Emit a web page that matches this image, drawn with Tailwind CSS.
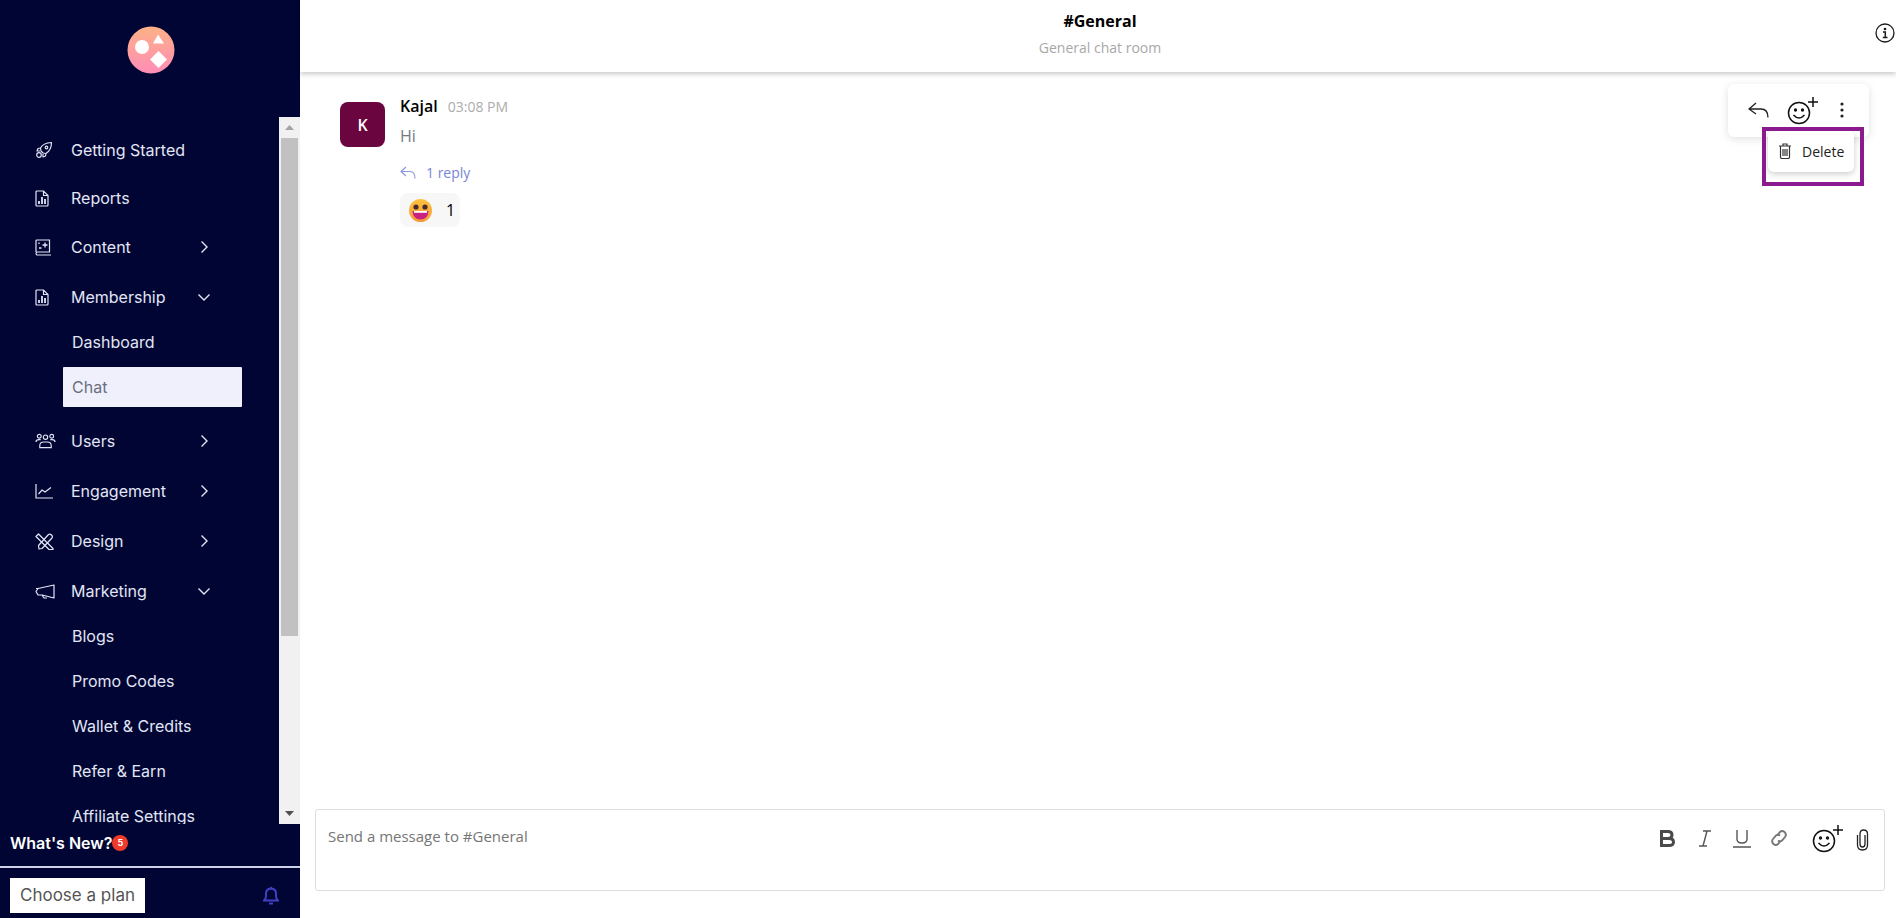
<!DOCTYPE html>
<html lang="en">
<head>
  <meta charset="UTF-8">
  <meta name="viewport" content="width=device-width, initial-scale=1.0">
  <title>Chat</title>
  <script src="https://cdn.jsdelivr.net/npm/@tailwindcss/browser@4"></script>
</head>
<body class="h-screen overflow-hidden bg-white flex font-['Open_Sans',sans-serif]">

  <!-- Sidebar -->
  <aside class="w-[300px] h-[918px] shrink-0 bg-[#000533] flex flex-col font-['Inter',sans-serif] text-[16px] text-[#e3e6f6]">
    <div class="h-[117px] shrink-0 pt-[26px] pl-[1px] flex justify-center">
      <svg width="48" height="48" viewBox="0 0 48 48">
        <defs>
          <linearGradient id="logoGrad" x1="0" y1="0" x2="0" y2="1">
            <stop offset="0" stop-color="#fdb186"/>
            <stop offset="1" stop-color="#ff8db8"/>
          </linearGradient>
        </defs>
        <circle cx="24" cy="24" r="23.500" fill="url(#logoGrad)"/>
        <circle cx="15" cy="21" r="7" fill="#fff"/>
        <path d="M31 8.500 L37 17.500 H26 Z" fill="#fff"/>
        <path d="M31.500 25 L40 33.500 L31.500 42 L23 33.500 Z" fill="#fff"/>
      </svg>
    </div>

    <div class="h-[707px] shrink-0 flex">
      <!-- Menu -->
      <nav class="w-[279px] overflow-hidden pt-[9px]">
        <a class="h-[48px] pl-[35px] flex items-center">
          <span class="w-[36px] shrink-0"><svg width="18" height="18" viewBox="0 0 18 18" fill="none" stroke="#e3e6f6" stroke-width="1.200" stroke-linejoin="round"><path d="M6 10 L5.500 7 Q8 2 16.500 1.500 Q16.500 9 11 12.500 L8 12 Z M5.500 7 L3 7.500 L2 10 L5 10 M11 12.500 L10.500 15 L8 16 L8 13"/><circle cx="11.500" cy="6.500" r="1.300"/><circle cx="4" cy="14" r="2.300"/></svg></span>
          <span>Getting Started</span>
        </a>
        <a class="h-[48px] pl-[35px] flex items-center">
          <span class="w-[36px] shrink-0"><svg width="14" height="17" viewBox="0 0 14 17" fill="none" stroke="#e3e6f6" stroke-width="1.200"><path d="M1 2 Q1 1 2 1 H8.500 L13 5.500 V15 Q13 16 12 16 H2 Q1 16 1 15 Z M8.500 1 V5.500 H13"/><path d="M4 14 V11 M7 14 V7 M10 14 V9" stroke-width="1.800"/></svg></span>
          <span>Reports</span>
        </a>
        <a class="h-[50px] pl-[35px] flex items-center">
          <span class="w-[36px] shrink-0"><svg width="16" height="17" viewBox="0 0 16 17" fill="none" stroke="#e3e6f6" stroke-width="1.200"><path d="M1 13 V2 Q1 1 2 1 H14.500 V13 H2.500 Q1 13 1 14.500 Q1 16 2.500 16 H16"/><path d="M7.500 6 H12.500 M10 3.500 V8.500 M4 3.500 V5 M4 9 H6.500" stroke-width="1.300"/></svg></span>
          <span class="w-[125px]">Content</span>
          <svg width="16" height="16" viewBox="0 0 16 16" fill="none" stroke="#e3e6f6" stroke-width="1.400"><path d="M5.500 2.500 L11 8 L5.500 13.500"/></svg>
        </a>
        <a class="h-[50px] pl-[35px] flex items-center">
          <span class="w-[36px] shrink-0"><svg width="14" height="17" viewBox="0 0 14 17" fill="none" stroke="#e3e6f6" stroke-width="1.200"><path d="M1 2 Q1 1 2 1 H8.500 L13 5.500 V15 Q13 16 12 16 H2 Q1 16 1 15 Z M8.500 1 V5.500 H13"/><path d="M4 14 V11 M7 14 V7 M10 14 V9" stroke-width="1.800"/></svg></span>
          <span class="w-[125px]">Membership</span>
          <svg width="16" height="16" viewBox="0 0 16 16" fill="none" stroke="#e3e6f6" stroke-width="1.400"><path d="M2.500 5.500 L8 11 L13.500 5.500"/></svg>
        </a>
        <a class="h-10 mb-[5px] ml-[63px] w-[179px] pl-[9px] flex items-center">Dashboard</a>
        <a class="h-10 mb-[9px] ml-[63px] w-[179px] pl-[9px] flex items-center bg-[#eff0fb] text-[#6a6e80] rounded-[1px]">Chat</a>
        <a class="h-[50px] pl-[35px] flex items-center">
          <span class="w-[36px] shrink-0"><svg width="21" height="16" viewBox="0 0 22 16" fill="none" stroke="#e3e6f6" stroke-width="1.200"><circle cx="4.500" cy="3" r="2"/><circle cx="11" cy="4" r="2.300"/><circle cx="17.500" cy="3" r="2"/><path d="M1 9 Q1 6.500 4 6.500 H6 M21 9 Q21 6.500 18 6.500 H16 M5 15 V13 Q5 9 9 9 H13 Q17 9 17 13 V15 Z"/></svg></span>
          <span class="w-[125px]">Users</span>
          <svg width="16" height="16" viewBox="0 0 16 16" fill="none" stroke="#e3e6f6" stroke-width="1.400"><path d="M5.500 2.500 L11 8 L5.500 13.500"/></svg>
        </a>
        <a class="h-[50px] pl-[35px] flex items-center">
          <span class="w-[36px] shrink-0"><svg width="18" height="16" viewBox="0 0 18 16" fill="none" stroke="#e3e6f6" stroke-width="1.200"><path d="M1 1 V15 H18"/><path d="M3.500 11 L7 7 L10 9 L16 4.500"/></svg></span>
          <span class="w-[125px]">Engagement</span>
          <svg width="16" height="16" viewBox="0 0 16 16" fill="none" stroke="#e3e6f6" stroke-width="1.400"><path d="M5.500 2.500 L11 8 L5.500 13.500"/></svg>
        </a>
        <a class="h-[50px] pl-[35px] flex items-center">
          <span class="w-[36px] shrink-0"><svg width="19" height="17" viewBox="0 0 19 17" fill="none" stroke="#e3e6f6" stroke-width="1.200" stroke-linejoin="round"><path d="M4 16 L3.500 12.500 L13.500 1.500 Q15 0.500 16.500 2 Q18 3.500 17 5 L7 15.500 Z"/><path d="M1 3.500 L3.500 1 L18 15.500 V16.500 H14 Z"/></svg></span>
          <span class="w-[125px]">Design</span>
          <svg width="16" height="16" viewBox="0 0 16 16" fill="none" stroke="#e3e6f6" stroke-width="1.400"><path d="M5.500 2.500 L11 8 L5.500 13.500"/></svg>
        </a>
        <a class="h-[50px] pl-[35px] flex items-center">
          <span class="w-[36px] shrink-0"><svg width="20" height="15" viewBox="0 0 20 15" fill="none" stroke="#e3e6f6" stroke-width="1.200" stroke-linejoin="round"><path d="M19 1 V14 L7 11 H3 L1 7.500 L3 4.500 Z M3 4.500 H1 M7 11 L9 14 H12"/></svg></span>
          <span class="w-[125px]">Marketing</span>
          <svg width="16" height="16" viewBox="0 0 16 16" fill="none" stroke="#e3e6f6" stroke-width="1.400"><path d="M2.500 5.500 L8 11 L13.500 5.500"/></svg>
        </a>
        <a class="h-10 mb-[5px] ml-[63px] pl-[9px] flex items-center">Blogs</a>
        <a class="h-10 mb-[5px] ml-[63px] pl-[9px] flex items-center">Promo Codes</a>
        <a class="h-10 mb-[5px] ml-[63px] pl-[9px] flex items-center">Wallet &amp; Credits</a>
        <a class="h-10 mb-[5px] ml-[63px] pl-[9px] flex items-center">Refer &amp; Earn</a>
        <a class="h-10 mb-[5px] ml-[63px] pl-[9px] flex items-center">Affiliate Settings</a>
      </nav>

      <!-- Scrollbar -->
      <div class="w-[21px] bg-[#f1f1f1] flex flex-col items-center">
        <div class="h-[21px] flex items-center justify-center">
          <svg width="9" height="5" viewBox="0 0 9 5"><path d="M4.500 0 L9 5 H0 Z" fill="#a3a3a3"/></svg>
        </div>
        <div class="w-[17px] h-[498px] bg-[#c1c1c1]"></div>
        <div class="flex-1 flex items-end justify-center pb-[8px]">
          <svg width="9" height="5" viewBox="0 0 9 5"><path d="M0 0 H9 L4.500 5 Z" fill="#505050"/></svg>
        </div>
      </div>
    </div>

    <div class="h-[42px] shrink-0 pl-[10px] pt-[7px] flex items-start font-semibold text-white">
      <span>What's New?</span>
      <span class="w-4 h-4 mt-[4px] rounded-full bg-[#f03a2b] text-white text-[9px] font-bold flex items-center justify-center">5</span>
    </div>
    <div class="h-[2px] bg-[#cfd2e6] shrink-0"></div>
    <div class="flex-1 pl-[10px] pt-[10px] pr-[21px] flex items-start justify-between">
      <a class="h-[35px] w-[135px] bg-white text-[#555555] text-[17px] flex items-center justify-center">Choose a plan</a>
      <svg class="mt-[8px]" width="16" height="19" viewBox="0 0 16 19" fill="none" stroke="#4040c4" stroke-width="2"><path d="M1 14.500 Q3 13 3 10 V7.500 Q3 3 8 2.500 Q13 3 13 7.500 V10 Q13 13 15 14.500 Z"/><path d="M6 17.500 H10 M8 1 V2.500"/></svg>
    </div>
  </aside>

  <!-- Main -->
  <main class="flex-1 min-w-0 h-[918px] flex flex-col relative">
    <header class="h-[72px] shrink-0 shadow-[0_2px_5px_rgba(0,0,0,0.22)] relative flex flex-col items-center pl-1">
      <h1 class="mt-[9px] text-[16px] leading-6 font-bold text-black">#General</h1>
      <p class="mt-[5px] text-[14px] leading-5 text-[#a8a8a8]">General chat room</p>
      <svg class="absolute right-[1px] top-[23px]" width="20" height="20" viewBox="0 0 20 20" fill="none" stroke="#1a1a1a" stroke-width="1.300"><circle cx="10" cy="10" r="9"/><path d="M8 9 H10.300 V14.500 M7.800 14.500 H12.500" stroke-width="1.500"/><circle cx="10" cy="6" r="0.700" fill="#1a1a1a"/></svg>
    </header>

    <!-- Messages -->
    <section class="flex-1 pl-[40px] pt-[30px] flex gap-[15px] items-start">
      <div class="w-[45px] h-[45px] rounded-lg bg-[#6a0540] text-white text-[16px] font-semibold flex items-center justify-center">K</div>
      <div>
        <div class="flex items-baseline gap-[10px] leading-[24px] -mt-[8px]">
          <span class="text-[16px] font-semibold text-black">Kajal</span>
          <span class="text-[14px] text-[#acacac]">03:08 PM</span>
        </div>
        <p class="mt-[5px] text-[16px] leading-6 text-[#76797f]">Hi</p>
        <div class="mt-[12px] h-6 flex items-center gap-[10px] text-[14px] text-[#7884d6]">
          <svg width="16" height="13" viewBox="0 0 16 13" fill="none" stroke="#8e98de" stroke-width="1.200"><path d="M6 1 L1 5.500 L6 10 M1 5.500 H10 Q15 5.500 15 12.500"/></svg>
          <span>1 reply</span>
        </div>
        <div class="mt-[9px] w-[60px] h-[34px] rounded-lg bg-[#f7f7f7] flex items-center pl-[9px] gap-[14px] text-[16px] text-black">
          <svg width="23" height="23" viewBox="0 0 23 23">
            <defs>
              <linearGradient id="emojiGrad" x1="0" y1="0" x2="0" y2="1">
                <stop offset="0" stop-color="#fdc23f"/>
                <stop offset="1" stop-color="#f59a3b"/>
              </linearGradient>
            </defs>
            <circle cx="11.500" cy="11.500" r="11.500" fill="url(#emojiGrad)"/>
            <circle cx="7" cy="8" r="2.600" fill="#4a2a2a"/>
            <circle cx="16" cy="8" r="2.600" fill="#4a2a2a"/>
            <path d="M3.500 12 H19.500 Q19 20.500 11.500 20.500 Q4 20.500 3.500 12 Z" fill="#c8217f"/>
            <path d="M5 12 H18 V13.800 H5 Z" fill="#fff"/>
          </svg>
          <span>1</span>
        </div>
      </div>
    </section>

    <!-- Message toolbar -->
    <div class="absolute left-[1428px] top-[84px] w-[141px] h-[53px] bg-white rounded-md shadow-[0_2px_8px_rgba(0,0,0,0.12)] flex items-center pl-[20px] pb-[2px]">
      <svg width="21" height="16" viewBox="0 0 21 16" fill="none" stroke="#222" stroke-width="1.300"><path d="M8 1 L1 7 L8 12 M1 7 H13 Q20 7 20 15.500"/></svg>
      <svg class="ml-[18px]" width="32" height="30" viewBox="0 0 32 30" fill="none" stroke="#111" stroke-width="1.500"><circle cx="12" cy="18" r="10.500"/><circle cx="8.500" cy="15" r="0.900" fill="#111"/><circle cx="15.500" cy="15" r="0.900" fill="#111"/><path d="M6.500 20 Q12 26 17.500 20"/><path d="M21 7 H31 M26 2 V12"/></svg>
      <svg class="ml-[21px]" width="4" height="16" viewBox="0 0 4 16" fill="#222"><circle cx="2" cy="2" r="1.600"/><circle cx="2" cy="8" r="1.600"/><circle cx="2" cy="14" r="1.600"/></svg>
    </div>

    <!-- Delete menu -->
    <div class="absolute left-[1468px] top-[130px] w-[86px] h-[42px] bg-white rounded-md shadow-[0_2px_6px_rgba(0,0,0,0.2)] flex items-center pl-[10px] gap-[10px] text-[14px] text-[#222]">
      <svg width="14" height="16" viewBox="0 0 14 16" fill="none" stroke="#333" stroke-width="1.200"><path d="M1 3 H13 M5 3 V1 H9 V3 M2.500 3 V14 Q2.500 15.500 4 15.500 H10 Q11.500 15.500 11.500 14 V3 M5 6 V13 M7 6 V13 M9 6 V13"/></svg>
      <span>Delete</span>
    </div>
    <div class="absolute left-[1462px] top-[127px] w-[102px] h-[59px] border-4 border-[#8a1a8e]"></div>

    <!-- Composer -->
    <div class="shrink-0 h-[82px] mb-[27px] ml-[15px] mr-[11px] border border-[#dddddd] rounded-[3px] flex items-start justify-between pl-[12px] pr-[15px] pt-[16px]">
      <span class="text-[15px] leading-5 text-[#757575]">Send a message to #General</span>
      <div class="flex items-center -mt-[3px] text-[#4a4a4a]">
        <svg width="17" height="17" viewBox="0 0 17 17" fill="none" stroke="#4a4a4a" stroke-width="3"><path d="M2.500 1.500 H9 Q13 1.500 13 5 Q13 8.500 9 8.500 H2.500 Z M2.500 1.500 V15.500 M2.500 8.500 H10 Q14.500 8.500 14.500 12 Q14.500 15.500 10 15.500 H2.500 Z"/></svg>
        <svg class="ml-[22px]" width="14" height="17" viewBox="0 0 14 17" fill="none" stroke="#555" stroke-width="1.400"><path d="M5 1 H13 M1 16 H9 M9 1 L5 16"/></svg>
        <svg class="ml-[21px]" width="18" height="19" viewBox="0 0 18 19" fill="none" stroke="#555" stroke-width="1.400"><path d="M4 1 V10 Q4 14 9 14 Q14 14 14 10 V1 M0 18 H18"/></svg>
        <svg class="ml-[19px]" width="18" height="18" viewBox="0 0 18 18" fill="none" stroke="#777" stroke-width="1.900"><path d="M7.500 6 L10 3 Q12 1 14.500 3 Q17 5.500 15 8 L12 11.500 Q10 13 8 11.500"/><path d="M10.500 12 L8 15 Q6 17 3.500 15 Q1 12.500 3 10 L6 6.500 Q8 5 10 6.500"/></svg>
        <svg class="ml-[24px]" width="32" height="30" viewBox="0 0 32 30" fill="none" stroke="#111" stroke-width="1.500"><circle cx="12" cy="18" r="10.500"/><circle cx="8.500" cy="15" r="0.900" fill="#111"/><circle cx="15.500" cy="15" r="0.900" fill="#111"/><path d="M6.500 20 Q12 26 17.500 20"/><path d="M21 7 H31 M26 2 V12"/></svg>
        <svg class="ml-[12px] mt-[3px]" width="13" height="22" viewBox="0 0 13 22" fill="none" stroke="#222" stroke-width="1.300"><path d="M9 6 V15 Q9 18 6.500 18 Q4 18 4 15 V5 Q4 1 7.500 1 Q11.500 1 11.500 5 V16 Q11.500 21 6.500 21 Q1.500 21 1.500 16 V6"/></svg>
      </div>
    </div>
  </main>

</body>
</html>
